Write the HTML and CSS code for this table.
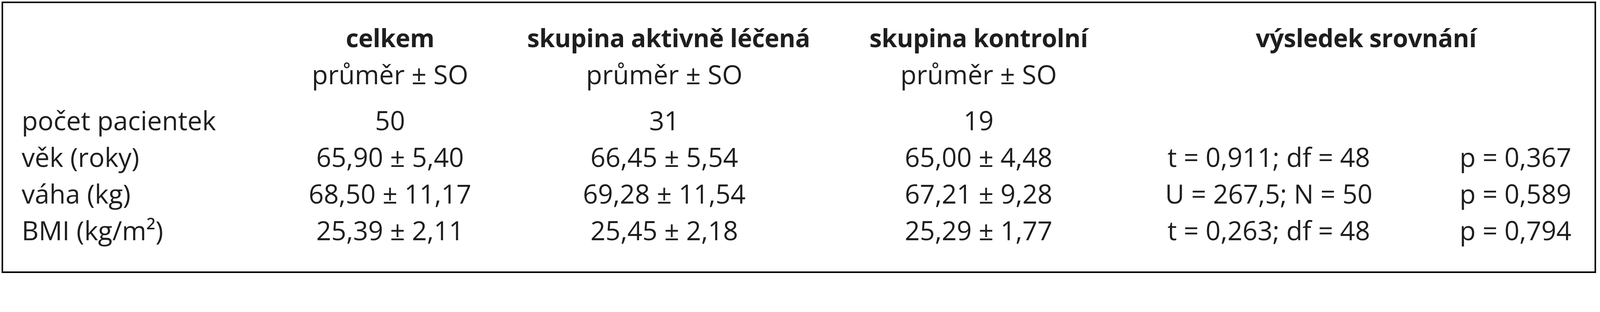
FILE: index.html
```html
<!DOCTYPE html>
<html lang="cs">
<head>
<meta charset="utf-8">
<title>Tabulka</title>
<link rel="stylesheet" href="styles.css">
</head>
<body>
<div class="frame">
  <div class="stats" role="table">
    <div class="cell head"></div>
    <div class="cell head">celkem</div>
    <div class="cell head">skupina aktivně léčená</div>
    <div class="cell head">skupina kontrolní</div>
    <div class="cell head result">výsledek srovnání</div>

    <div class="cell"></div>
    <div class="cell">průměr ± SO</div>
    <div class="cell">průměr ± SO</div>
    <div class="cell">průměr ± SO</div>
    <div class="cell"></div>
    <div class="cell"></div>

    <div class="cell label">počet pacientek</div>
    <div class="cell">50</div>
    <div class="cell">31</div>
    <div class="cell">19</div>
    <div class="cell"></div>
    <div class="cell"></div>

    <div class="cell label">věk (roky)</div>
    <div class="cell">65,90 ± 5,40</div>
    <div class="cell">66,45 ± 5,54</div>
    <div class="cell">65,00 ± 4,48</div>
    <div class="cell">t = 0,911; df = 48</div>
    <div class="cell pval">p = 0,367</div>

    <div class="cell label">váha (kg)</div>
    <div class="cell">68,50 ± 11,17</div>
    <div class="cell">69,28 ± 11,54</div>
    <div class="cell">67,21 ± 9,28</div>
    <div class="cell">U = 267,5; N = 50</div>
    <div class="cell pval">p = 0,589</div>

    <div class="cell label">BMI (kg/m²)</div>
    <div class="cell">25,39 ± 2,11</div>
    <div class="cell">25,45 ± 2,18</div>
    <div class="cell">25,29 ± 1,77</div>
    <div class="cell">t = 0,263; df = 48</div>
    <div class="cell pval">p = 0,794</div>
  </div>
</div>
</body>
</html>
```
FILE: styles.css
```css
:root {
  /* one pixel of the 4621px-wide design */
  --u: calc(100vw / 4621);
}

html, body {
  margin: 0;
  padding: 0;
  background: #ffffff;
  overflow: hidden;
}

body {
  font-family: "Open Sans", "Noto Sans", "DejaVu Sans", sans-serif;
  color: #1e1e1e;
}

.frame {
  box-sizing: border-box;
  width: calc(4605 * var(--u));
  height: calc(785 * var(--u));
  margin: calc(5 * var(--u));
  border: calc(4.6 * var(--u)) solid #000000;
  padding-top: calc(47.4 * var(--u));
}

.stats {
  display: grid;
  grid-template-columns:
    calc(721 * var(--u))
    calc(792 * var(--u))
    calc(792 * var(--u))
    calc(1024 * var(--u))
    calc(652 * var(--u))
    calc(616 * var(--u));
  grid-template-rows:
    calc(106 * var(--u))
    calc(132.5 * var(--u))
    calc(106 * var(--u))
    calc(106 * var(--u))
    calc(106 * var(--u))
    calc(106 * var(--u));
  font-size: calc(76 * var(--u));
  line-height: calc(106 * var(--u));
}

.cell {
  text-align: center;
  white-space: nowrap;
  min-width: 0;
}

.head {
  font-size: calc(72 * var(--u));
  font-weight: 700;
  letter-spacing: calc(-0.6 * var(--u));
}

.result {
  grid-column: span 2;
  padding-right: calc(54 * var(--u));
}

.label {
  text-align: left;
  padding-left: calc(53 * var(--u));
}

.pval {
  text-align: left;
  padding-left: calc(225 * var(--u));
}
```
